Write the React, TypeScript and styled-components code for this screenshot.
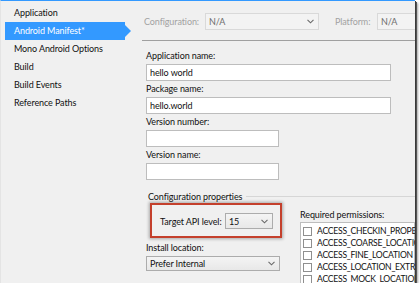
import React from "react";
import styled, { createGlobalStyle } from "styled-components";

const GlobalStyle = createGlobalStyle`
  html, body {
    margin: 0;
    padding: 0;
    background: #fff;
  }
  body {
    font-family: Lato, "Liberation Sans", sans-serif;
  }
`;

const NAV_ITEMS = [
  "Application",
  "Android Manifest*",
  "Mono Android Options",
  "Build",
  "Build Events",
  "Reference Paths",
];

const PERMISSIONS = [
  "ACCESS_CHECKIN_PROPERTIES",
  "ACCESS_COARSE_LOCATION",
  "ACCESS_FINE_LOCATION",
  "ACCESS_LOCATION_EXTRA_COMMANDS",
  "ACCESS_MOCK_LOCATION",
  "ACCESS_NETWORK_STATE",
];

function Chevron() {
  return (
    <svg width="7" height="5" viewBox="0 0 7 5">
      <path d="M0.5 0.8 L3.5 3.8 L6.5 0.8" fill="none" stroke="#6a6a6a" strokeWidth="1.1" />
    </svg>
  );
}

function Combo({
  value,
  width,
  height = 17,
  disabled,
}: {
  value: string;
  width: number;
  height?: number;
  disabled?: boolean;
}) {
  return (
    <ComboBox $width={width} $height={height} $disabled={disabled}>
      <span>{value}</span>
      <Chevron />
    </ComboBox>
  );
}

export default function App() {
  return (
    <>
      <GlobalStyle />
      <Window>
        <Sidebar>
          {NAV_ITEMS.map((item, index) => (
            <NavItem key={item} $active={index === 1}>
              {item}
            </NavItem>
          ))}
        </Sidebar>

        <Main>
          <TopBar>
            <BarLabel $width={61}>Configuration:</BarLabel>
            <Combo value="N/A" width={114} disabled />
            <BarLabel $width={42} $gap={16}>
              Platform:
            </BarLabel>
            <Combo value="N/A" width={80} disabled />
          </TopBar>
          <Separator />

          <Form>
            <FieldLabel>Application name:</FieldLabel>
            <TextBox $width={245}>hello world</TextBox>
            <FieldLabel>Package name:</FieldLabel>
            <TextBox $width={245}>hello.world</TextBox>
            <FieldLabel>Version number:</FieldLabel>
            <TextBox $width={133} />
            <FieldLabel>Version name:</FieldLabel>
            <TextBox $width={133} />

            <GroupHeader>
              <span>Configuration properties</span>
              <GroupLine />
            </GroupHeader>

            <GroupBody>
              <div>
                <Highlight>
                  <ApiLabel>Target API level:</ApiLabel>
                  <Combo value="15" width={48} height={16} />
                </Highlight>
                <FieldLabel $top={3}>Install location:</FieldLabel>
                <Combo value="Prefer Internal" width={134} height={15} />
              </div>

              <PermissionColumn>
                <FieldLabel>Required permissions:</FieldLabel>
                <PermissionList>
                  {PERMISSIONS.map((perm) => (
                    <PermissionRow key={perm}>
                      <CheckBox />
                      <span>{perm}</span>
                    </PermissionRow>
                  ))}
                </PermissionList>
              </PermissionColumn>
            </GroupBody>
          </Form>
        </Main>
      </Window>
    </>
  );
}

const Window = styled.div`
  width: 415px;
  height: 283px;
  box-sizing: border-box;
  display: flex;
  overflow: hidden;
  background: #f0f0f0;
  border-top: 1px solid #3399ff;
  border-left: 1px solid #e4e4e4;
  color: #111;
  font-size: 9px;
  letter-spacing: -0.1px;
  box-shadow: 1px 1px 0 #3a3a3a, 2px 2px 0 #555, 3px 3px 2px rgba(0, 0, 0, 0.35);
`;

const Sidebar = styled.nav`
  width: 129px;
  flex: none;
  padding-top: 3px;
`;

const NavItem = styled.div<{ $active?: boolean }>`
  position: relative;
  width: 120px;
  height: 18px;
  margin-left: 4px;
  padding-left: 9px;
  box-sizing: border-box;
  line-height: 18px;
  white-space: nowrap;
  background: ${(p) => (p.$active ? "#3399ff" : "transparent")};
  color: ${(p) => (p.$active ? "#fff" : "inherit")};

  &::after {
    content: "";
    display: ${(p) => (p.$active ? "block" : "none")};
    position: absolute;
    left: 100%;
    top: 3px;
    border-left: 6px solid #3399ff;
    border-top: 6px solid transparent;
    border-bottom: 6px solid transparent;
  }
`;

const Main = styled.div`
  flex: 1;
  min-width: 0;
  display: flex;
  flex-direction: column;
  & > * {
    flex: none;
  }
`;

const TopBar = styled.div`
  height: 39px;
  box-sizing: border-box;
  padding: 12px 0 0 14px;
  display: flex;
  align-items: flex-start;
  white-space: nowrap;
`;

const BarLabel = styled.span<{ $width: number; $gap?: number }>`
  flex: none;
  width: ${(p) => p.$width}px;
  margin-left: ${(p) => p.$gap || 0}px;
  line-height: 17px;
  color: #a2a2a2;
`;

const ComboBox = styled.div<{ $width: number; $height: number; $disabled?: boolean }>`
  flex: none;
  width: ${(p) => p.$width}px;
  height: ${(p) => p.$height}px;
  box-sizing: border-box;
  padding: 0 4px 0 3px;
  display: flex;
  align-items: center;
  justify-content: space-between;
  border: 1px solid ${(p) => (p.$disabled ? "#d9d9d9" : "#acacac")};
  background: ${(p) =>
    p.$disabled ? "#f3f3f3" : "linear-gradient(#f4f4f4, #e8e8e8)"};
  color: ${(p) => (p.$disabled ? "#6d6d6d" : "#111")};
  white-space: nowrap;
`;

const Separator = styled.div`
  height: 1px;
  margin-left: 12px;
  background: #a0a0a0;
`;

const Form = styled.div`
  padding: 8px 0 0 16px;
`;

const FieldLabel = styled.div<{ $top?: number }>`
  height: 14px;
  line-height: 14px;
  margin: ${(p) => p.$top || 0}px 0 1px;
  white-space: nowrap;
`;

const TextBox = styled.div<{ $width: number }>`
  width: ${(p) => p.$width}px;
  height: 17px;
  box-sizing: border-box;
  margin-bottom: 1px;
  padding-left: 3px;
  border: 1px solid #bdbdbd;
  background: #fff;
  line-height: 15px;
`;

const GroupHeader = styled.div`
  height: 14px;
  margin: 9px 0 0 2px;
  display: flex;
  align-items: center;
  gap: 4px;
  white-space: nowrap;
`;

const GroupLine = styled.div`
  flex: 1;
  height: 1px;
  background: #d6d6d6;
`;

const GroupBody = styled.div`
  display: grid;
  grid-template-columns: 154px 1fr;
`;

const Highlight = styled.div`
  width: 132px;
  margin-left: 4px;
  box-sizing: border-box;
  padding: 8px 8px 7px;
  display: flex;
  align-items: center;
  border: 2px solid #c4402c;
  box-shadow: 0 0 3px 1px rgba(0, 0, 0, 0.3);
`;

const ApiLabel = styled.span`
  width: 65px;
  flex: none;
  white-space: nowrap;
`;

const PermissionColumn = styled.div`
  padding-top: 5px;
  min-width: 0;
`;

const PermissionList = styled.div`
  height: 120px;
  margin-top: -1px;
  padding-top: 2px;
  box-sizing: border-box;
  border: 1px solid #bdbdbd;
  background: #fff;
`;

const PermissionRow = styled.div`
  height: 12px;
  padding-left: 2px;
  display: flex;
  align-items: center;
  gap: 5px;
  white-space: nowrap;
  font-size: 8.6px;
  letter-spacing: -0.25px;
`;

const CheckBox = styled.span`
  flex: none;
  width: 9px;
  height: 9px;
  box-sizing: border-box;
  border: 1px solid #8f8f8f;
  background: #fff;
`;
